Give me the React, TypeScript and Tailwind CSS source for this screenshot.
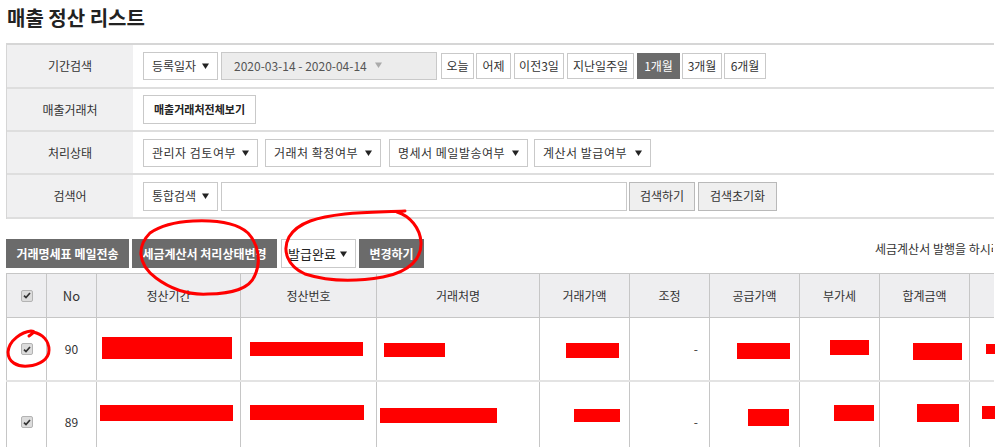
import React from "react";

const FONT = { fontFamily: '"Noto Sans CJK KR", "Noto Sans", sans-serif' };

function Arrow({ color = "#222" }: { color?: string }) {
  return (
    <svg width="7" height="6" viewBox="0 0 7 6" className="shrink-0">
      <path d="M0 0.5H7L3.5 6Z" fill={color} />
    </svg>
  );
}

function Select({ label, w, h = 28, ml = 0, tracking = false }: { label: string; w: string; h?: number; ml?: string | number; tracking?: boolean }) {
  return (
    <div
      className={`${w} flex items-center justify-between border border-[#c9c9c9] bg-white pl-[8px] pr-[8px] text-[12px] text-[#333] ${tracking ? "tracking-[0.5px]" : ""}`}
      style={{ height: h, marginLeft: ml as number }}
    >
      <span className="whitespace-nowrap">{label}</span>
      <Arrow />
    </div>
  );
}

function Check() {
  return (
    <div className="flex h-[12px] w-[12px] items-center justify-center rounded-[2px] border border-[#b3b3b3] bg-[#dcdcdc]">
      <svg width="8" height="7" viewBox="0 0 8 7">
        <path d="M1 3.6L3 5.6L7 1" stroke="#333" strokeWidth="1.7" fill="none" />
      </svg>
    </div>
  );
}

function Red({ w, h }: { w: number; h: number }) {
  return <div className="shrink-0 bg-[#ff0000]" style={{ width: w, height: h }} />;
}

const COLS = "grid grid-cols-[41px_50px_144px_136px_163px_90px_80px_90px_80px_90px_25px]";

type Box = [number, number, number, number]; // pl, pt, w, h

function DataRow({ no, boxes, h, bottom }: { no: string; boxes: Box[]; h: number; bottom?: boolean }) {
  const cell = "border-r border-[#c6c6c6] overflow-hidden";
  const boxCell = (b: Box) => (
    <div className={cell} style={{ paddingLeft: b[0], paddingTop: b[1] }}>
      <Red w={b[2]} h={b[3]} />
    </div>
  );
  return (
    <div className={`${COLS} ${bottom ? "border-b-2 border-[#e3e3e3]" : ""}`} style={{ height: h }}>
      <div className={`${cell} flex items-center justify-center border-l border-[#c6c6c6]`}>
        <Check />
      </div>
      <div className={`${cell} flex items-center justify-center text-[12px] text-[#333]`}>{no}</div>
      {boxCell(boxes[0])}
      {boxCell(boxes[1])}
      {boxCell(boxes[2])}
      {boxCell(boxes[3])}
      <div className={`${cell} flex items-center justify-end pr-[11px] text-[12px] text-[#333]`}>-</div>
      {boxCell(boxes[4])}
      {boxCell(boxes[5])}
      {boxCell(boxes[6])}
      <div className="overflow-hidden" style={{ paddingLeft: boxes[7][0], paddingTop: boxes[7][1] }}>
        <Red w={boxes[7][2]} h={boxes[7][3]} />
      </div>
    </div>
  );
}

export default function App() {
  const label = "flex w-[126px] shrink-0 items-center justify-center bg-[#f0f0f1] text-[12px] text-[#333]";
  const row = "flex border-b-2 border-[#dedede]";
  const btn = "flex h-[26px] items-center justify-center border border-[#c9c9c9] bg-white text-[12px] text-[#333] whitespace-nowrap";
  const darkBtn = "flex h-[29px] items-center justify-center bg-[#6b6b6b] text-[12px] font-bold text-white whitespace-nowrap";
  const headCell = "flex items-center justify-center border-r border-[#c6c6c6] text-[12px] text-[#333]";

  return (
    <div className="relative h-[447px] w-[1000px] overflow-hidden bg-white pl-[6px]" style={FONT}>
      <div className="w-[988px]">
        {/* Title */}
        <div className="pt-[4px] pl-[1px] text-[20px] font-bold leading-[28px] text-[#222]">매출 정산 리스트</div>

        {/* Filter table */}
        <div className="mt-[11px] border-t-2 border-l border-[#d6d6d6]">
          <div className={row} style={{ height: 44 }}>
            <div className={label}>기간검색</div>
            <div className="flex items-center pl-[10px]">
              <Select label="등록일자" w="w-[75px]" />
              <div className="ml-[3px] flex h-[28px] w-[216px] items-center border border-[#c9c9c9] bg-[#ececec] pl-[12px] text-[12px] text-[#555]">
                <span>2020-03-14 - 2020-04-14</span>
                <span className="ml-[8px] mb-[2px]">
                  <Arrow color="#aaa" />
                </span>
              </div>
              <div className={`${btn} ml-[4px] w-[33px]`}>오늘</div>
              <div className={`${btn} ml-[2px] w-[35px]`}>어제</div>
              <div className={`${btn} ml-[3px] w-[50px]`}>이전3일</div>
              <div className={`${btn} ml-[3px] w-[67px]`}>지난일주일</div>
              <div className="ml-[3px] flex h-[26px] w-[43px] items-center justify-center border border-[#6b6b6b] bg-[#6b6b6b] text-[12px] text-white">1개월</div>
              <div className={`${btn} ml-[2px] w-[40px]`}>3개월</div>
              <div className={`${btn} ml-[2px] w-[42px]`}>6개월</div>
            </div>
          </div>

          <div className={row} style={{ height: 43 }}>
            <div className={label}>매출거래처</div>
            <div className="flex items-center pl-[10px]">
              <div className="flex h-[29px] w-[113px] items-center justify-center border border-[#c9c9c9] bg-white text-[11px] font-bold text-[#222]">
                매출거래처전체보기
              </div>
            </div>
          </div>

          <div className={row} style={{ height: 43 }}>
            <div className={label}>처리상태</div>
            <div className="flex items-center pl-[10px]">
              <Select label="관리자 검토여부" w="w-[115px]" tracking />
              <Select label="거래처 확정여부" w="w-[116px]" ml={7} tracking />
              <Select label="명세서 메일발송여부" w="w-[139px]" ml={8} tracking />
              <Select label="계산서 발급여부" w="w-[117px]" ml={6} tracking />
            </div>
          </div>

          <div className={row} style={{ height: 44 }}>
            <div className={label}>검색어</div>
            <div className="flex items-center pl-[10px]">
              <Select label="통합검색" w="w-[75px]" h={29} />
              <div className="ml-[3px] h-[29px] w-[406px] border border-[#c9c9c9] bg-white" />
              <div className="ml-[2px] flex h-[29px] w-[66px] items-center justify-center border border-[#b9b9b9] bg-[#efefef] text-[12px] text-[#333]">
                검색하기
              </div>
              <div className="ml-[3px] flex h-[29px] w-[79px] items-center justify-center border border-[#b9b9b9] bg-[#efefef] text-[12px] text-[#333]">
                검색초기화
              </div>
            </div>
          </div>
        </div>

        {/* Action bar */}
        <div className="mt-[20px] flex items-start">
          <div className={`${darkBtn} w-[123px]`}>거래명세표 메일전송</div>
          <div className={`${darkBtn} ml-[3px] w-[145px]`}>세금계산서 처리상태변경</div>
          <div className="ml-[4px] flex h-[29px] w-[75px] items-center justify-between border border-[#c9c9c9] bg-white pl-[6px] pr-[8px] text-[13px] text-[#222]">
            <span>발급완료</span>
            <Arrow />
          </div>
          <div className={`${darkBtn} ml-[3px] w-[65px]`}>변경하기</div>
          <div className="ml-[451px] w-[118px] overflow-hidden whitespace-nowrap pt-[1px] text-[12px] leading-[18px] text-[#333]">
            세금계산서 발행을 하시려면 체크 후 버튼을 눌러주세요.
          </div>
        </div>

        {/* Table */}
        <div className="mt-[5px]">
          <div className={`${COLS} h-[45px] border-t border-b border-[#c6c6c6] bg-[#eeeef0]`}>
            <div className={`${headCell} border-l`}>
              <Check />
            </div>
            <div className={`${headCell} text-[13px]`}>No</div>
            <div className={headCell}>정산기간</div>
            <div className={headCell}>정산번호</div>
            <div className={headCell}>거래처명</div>
            <div className={headCell}>거래가액</div>
            <div className={headCell}>조정</div>
            <div className={headCell}>공급가액</div>
            <div className={headCell}>부가세</div>
            <div className={headCell}>합계금액</div>
            <div className="flex items-center justify-center" />
          </div>
          <DataRow
            no="90"
            h={64}
            bottom
            boxes={[
              [5, 19, 130, 22],
              [9, 24, 113, 14],
              [7, 25, 61, 14],
              [26, 25, 53, 15],
              [27, 25, 53, 16],
              [30, 22, 39, 15],
              [33, 25, 49, 17],
              [16, 26, 13, 10],
            ]}
          />
          <DataRow
            no="89"
            h={80}
            boxes={[
              [3, 23, 133, 16],
              [9, 23, 114, 15],
              [3, 26, 117, 15],
              [34, 27, 46, 13],
              [38, 27, 41, 17],
              [34, 23, 40, 16],
              [37, 22, 42, 18],
              [12, 24, 14, 13],
            ]}
          />
        </div>
      </div>

      {/* Hand-drawn red annotations */}
      <svg className="pointer-events-none absolute left-0 top-0" width="1000" height="447" viewBox="0 0 1000 447" fill="none">
        <path
          d="M150 233 C 138 245, 136 263, 156 278 C 172 290, 190 295, 208 294 C 230 294, 250 289, 255 275 C 261 262, 259 245, 248 233 C 237 223, 215 220, 193 221 C 175 222, 160 226, 150 233"
          stroke="#ff0000"
          strokeWidth="3"
          strokeLinecap="round"
        />
        <path
          d="M397 212 C 410 216, 420 228, 421 242 C 422 258, 410 272, 383 277 C 360 281, 330 282, 305 274 C 287 266, 282 250, 289 237 C 298 222, 318 217, 345 214 C 365 212, 385 212, 405 211"
          stroke="#ff0000"
          strokeWidth="3"
          strokeLinecap="round"
        />
        <path
          d="M29 336 C 33 333, 36 331, 31 331 C 22 332, 9 340, 8 352 C 8 362, 17 367, 28 366 C 40 365, 49 359, 49 350 C 49 341, 43 334, 33 332"
          stroke="#ff0000"
          strokeWidth="3"
          strokeLinecap="round"
        />
      </svg>
    </div>
  );
}
